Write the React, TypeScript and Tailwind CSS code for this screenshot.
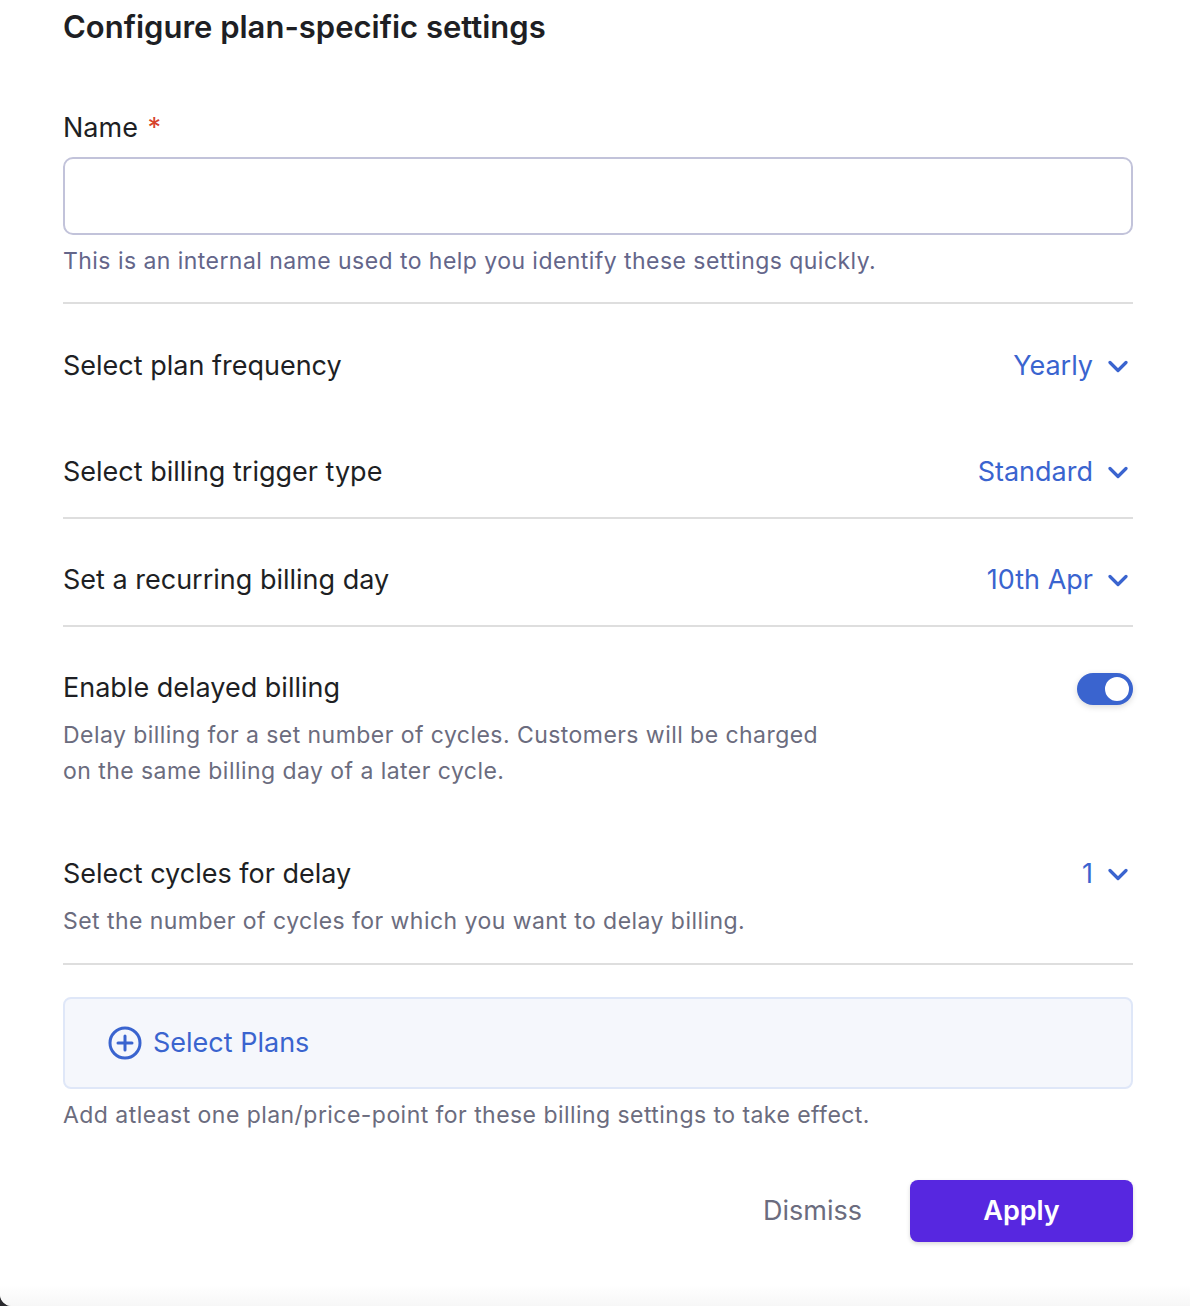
function Chevron() {
  return (
    <svg width="20" height="13" viewBox="0 0 20 13" fill="none">
      <path
        d="M2 2.5l8 8 8-8"
        stroke="#3a64cf"
        strokeWidth="3.2"
        strokeLinecap="round"
        strokeLinejoin="round"
      />
    </svg>
  );
}

function SelectRow({ label, value }: { label: string; value: string }) {
  return (
    <div className="flex h-[36px] items-center justify-between">
      <span className="text-[27px] text-[#1e1f24]">{label}</span>
      <button className="mr-[5px] flex items-center gap-[15px] text-[27px] text-[#3a64cf]">
        {value}
        <Chevron />
      </button>
    </div>
  );
}

export default function App() {
  return (
    <div className="bg-[#2a2a2e]">
      <div
        className="
          flex
          min-h-[1306px]
          flex-col
          rounded-bl-[12px]
          bg-white
          font-['Inter',sans-serif]
        "
      >
        <div className="flex-1 pl-[63px] pr-[57px] pt-[9px]">
          <h1 className="text-[31px] font-semibold leading-[36px] text-[#1e1f24]">
            Configure plan-specific settings
          </h1>

          <label className="mt-[65px] block text-[27px] leading-[36px] text-[#1e1f24]">
            Name <span className="ml-[2px] text-[#d6412b]">*</span>
          </label>
          <input
            className="
              mt-[11px]
              block
              h-[78px]
              w-full
              rounded-[10px]
              border-2
              border-[#c2c3da]
              px-4
              text-[24px]
              outline-none
            "
          />
          <p className="mt-[10px] text-[23px] leading-[32px] tracking-[0.45px] text-[#64668a]">
            This is an internal name used to help you identify these settings quickly.
          </p>

          <div className="mt-[25px] h-[2px] bg-[#dedede]" />

          <div className="flex flex-col gap-[70px] pb-[27px] pt-[44px]">
            <SelectRow label="Select plan frequency" value="Yearly" />
            <SelectRow label="Select billing trigger type" value="Standard" />
          </div>

          <div className="h-[2px] bg-[#dedede]" />

          <div className="pb-[27px] pt-[43px]">
            <SelectRow label="Set a recurring billing day" value="10th Apr" />
          </div>

          <div className="h-[2px] bg-[#dedede]" />

          <div className="pb-[24px] pt-[43px]">
            <div className="flex items-start justify-between">
              <div>
                <div className="text-[27px] leading-[36px] text-[#1e1f24]">
                  Enable delayed billing
                </div>
                <p className="mt-[11px] max-w-[780px] text-[23px] leading-[36px] tracking-[0.45px] text-[#6b6c7e]">
                  Delay billing for a set number of cycles. Customers will be charged
                  on the same billing day of a later cycle.
                </p>
              </div>
              <div className="mt-[3px] flex h-[32px] w-[56px] items-center rounded-full bg-[#3a64cf] p-[2px] shadow-[0_2px_6px_rgba(0,0,0,0.15)]">
                <div className="ml-auto h-[28px] w-[28px] rounded-full border-2 border-[#3a64cf] bg-white" />
              </div>
            </div>

            <div className="mt-[67px]">
              <SelectRow label="Select cycles for delay" value="1" />
              <p className="mt-[11px] text-[23px] leading-[36px] tracking-[0.45px] text-[#6b6c7e]">
                Set the number of cycles for which you want to delay billing.
              </p>
            </div>
          </div>

          <div className="h-[2px] bg-[#dedede]" />

          <button
            className="
              mt-[32px]
              flex
              h-[92px]
              w-full
              items-center
              gap-[11px]
              rounded-[8px]
              border-2
              border-[#dfe7f8]
              bg-[#f5f7fc]
              pl-[43px]
              text-[27px]
              text-[#3a64cf]
            "
          >
            <svg width="34" height="34" viewBox="0 0 34 34" fill="none">
              <circle cx="17" cy="17" r="15" stroke="#3a64cf" strokeWidth="3" />
              <path d="M17 10v14M10 17h14" stroke="#3a64cf" strokeWidth="3" strokeLinecap="round" />
            </svg>
            Select Plans
          </button>
          <p className="mt-[8px] text-[23px] leading-[36px] tracking-[0.45px] text-[#6b6c7e]">
            Add atleast one plan/price-point for these billing settings to take effect.
          </p>

          <div className="mt-[47px] flex items-center justify-end gap-[48px]">
            <button className="text-[27px] text-[#6b6c7e]">Dismiss</button>
            <button
              className="
                h-[62px]
                w-[223px]
                rounded-[8px]
                bg-[#5727e0]
                text-[27px]
                font-semibold
                text-white
                shadow-[0_2px_4px_rgba(0,0,0,0.15)]
              "
            >
              Apply
            </button>
          </div>
        </div>
        <div className="h-[21px] rounded-bl-[12px] bg-gradient-to-b from-white to-[#f7f7f7]" />
      </div>
    </div>
  );
}
